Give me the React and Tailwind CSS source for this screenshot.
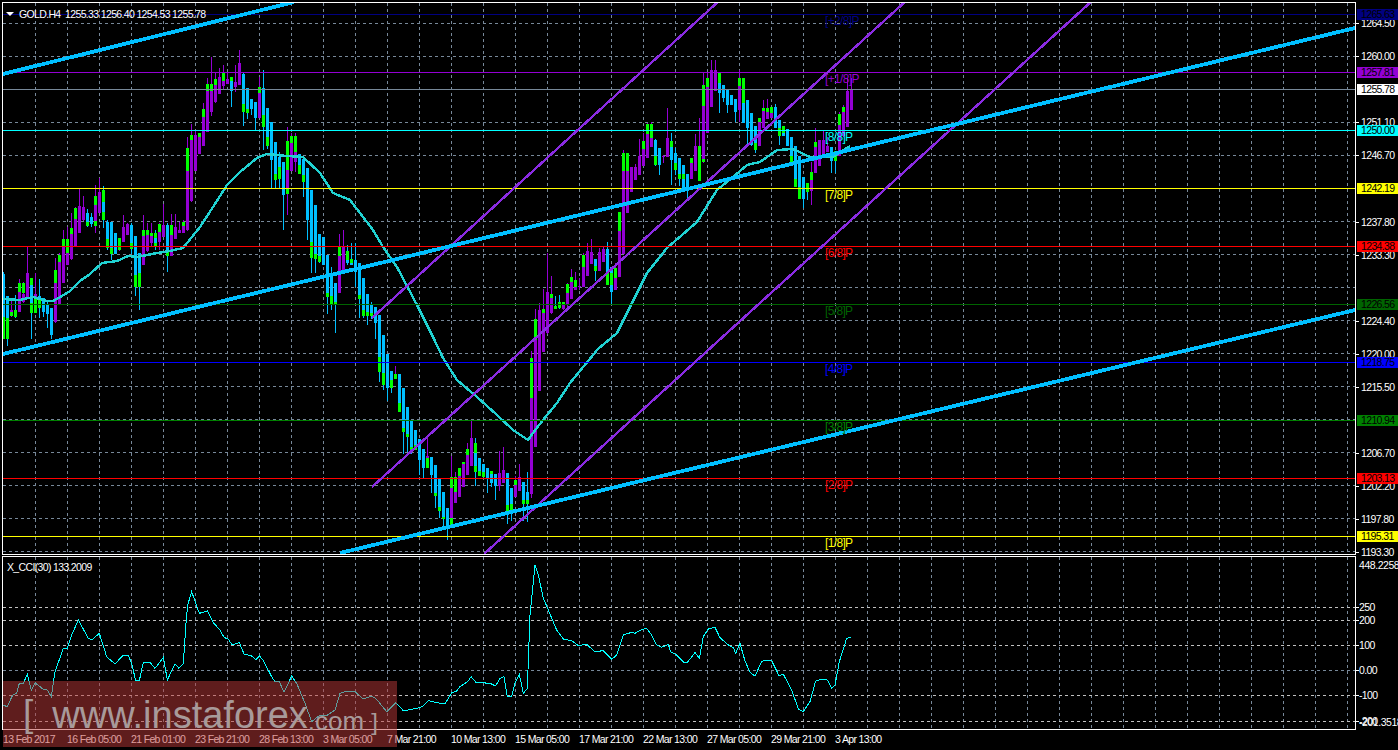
import React from 'react';

const BLUE = '#00bfff';
const PURPLE = '#9400d3';
const GREEN = '#00ff00';

// candles read off the chart: [x, type, bodyTop, bodyBottom, wickTop, wickBottom, ...greenFrom/To]
const seg = (ox, oy, rows) =>
  rows.map(([zx, t, top, bot, wt, wb, ...g]) => {
    const i = Math.round((ox + zx / 3 - 3.5) / 4);
    const y = (v) => oy + v / 3;
    const green = [];
    for (let k = 0; k < g.length; k += 2) green.push([y(g[k]), y(g[k + 1])]);
    return { i, t, top: y(top), bot: y(bot), wt: y(wt), wb: y(wb), green };
  });

const candles = [
  ...seg(0, 50, [
    [10, 'b', 672, 868, 665, 868, 800, 868], [22, 'b', 738, 868, 738, 888, 805, 868], [34, 'p', 780, 798, 750, 800, 785, 798],
    [46, 'b', 780, 800, 735, 805, 780, 800], [58, 'p', 725, 785, 688, 785, 700, 725], [70, 'p', 732, 755, 695, 760, 700, 730],
    [82, 'p', 670, 745, 592, 745], [94, 'b', 705, 788, 684, 868, 684, 705, 760, 788], [106, 'p', 732, 788, 668, 790, 745, 788],
    [118, 'b', 738, 775, 688, 805, 745, 775], [130, 'b', 745, 785, 745, 800], [142, 'b', 765, 792, 755, 833], [154, 'b', 775, 855, 775, 868],
    [166, 'p', 700, 815, 625, 820, 660, 700], [178, 'p', 635, 762, 610, 762, 615, 635], [190, 'p', 587, 698, 540, 700, 568, 587],
    [202, 'p', 610, 645, 530, 645, 568, 610], [214, 'p', 553, 628, 490, 630, 535, 553], [226, 'p', 508, 588, 470, 590, 475, 508],
    [238, 'p', 468, 548, 418, 548], [250, 'p', 472, 510, 438, 512], [262, 'b', 490, 528, 478, 530, 515, 528], [274, 'b', 502, 522, 490, 530],
    [286, 'p', 465, 512, 405, 548, 438, 465, 512, 528], [298, 'p', 425, 488, 383, 490], [310, 'b', 455, 510, 408, 535, 420, 455, 485, 510],
    [322, 'b', 515, 595, 510, 600, 568, 595], [334, 'b', 515, 612, 515, 630, 595, 612], [346, 'b', 548, 612, 548, 612],
    [358, 'p', 570, 600, 565, 602, 565, 600], [370, 'p', 530, 575, 495, 577], [382, 'p', 522, 555, 518, 556], [394, 'b', 525, 598, 520, 612, 580, 598],
    [406, 'b', 558, 712, 558, 738, 675, 712], [418, 'b', 610, 712, 612, 780, 670, 712], [430, 'p', 557, 645, 495, 645, 540, 557],
    [442, 'p', 555, 602, 520, 605, 540, 555], [454, 'p', 558, 580, 520, 590, 548, 558], [466, 'b', 565, 590, 540, 600, 548, 565, 580, 590],
    [478, 'p', 545, 575, 520, 600, 522, 545], [490, 'p', 525, 560, 462, 562], [502, 'b', 525, 618, 520, 665, 600, 618],
    [514, 'p', 555, 618, 492, 618, 525, 555], [526, 'p', 530, 568, 492, 568], [538, 'p', 540, 550, 515, 550], [550, 'p', 528, 548, 510, 550, 515, 528],
    [562, 'p', 362, 540, 262, 542, 295, 362], [574, 'p', 270, 452, 222, 455, 255, 270], [586, 'p', 255, 362, 240, 362], [598, 'p', 262, 312, 250, 312, 250, 262],
    [610, 'p', 202, 288, 158, 288, 178, 202], [622, 'p', 122, 245, 85, 245, 102, 122], [634, 'p', 122, 185, 22, 198, 102, 122], [646, 'p', 105, 155, 70, 158, 88, 105],
    [658, 'p', 80, 132, 55, 132], [670, 'p', 92, 108, 45, 120, 70, 92], [682, 'p', 88, 102, 70, 102], [694, 'b', 92, 122, 82, 172, 82, 92],
    [706, 'p', 95, 112, 45, 125], [718, 'p', 40, 105, 0, 105], [730, 'b', 72, 185, 68, 228, 162, 185], [742, 'b', 115, 190, 115, 208, 178, 190],
    [754, 'b', 148, 178, 148, 195], [766, 'b', 155, 205, 155, 240], [778, 'p', 130, 205, 80, 205, 112, 130], [790, 'b', 115, 230, 60, 300, 195, 230],
    [802, 'b', 175, 288, 175, 298, 262, 288], [814, 'b', 215, 330, 215, 415], [826, 'b', 275, 390, 275, 415, 372, 390], [838, 'b', 322, 388, 305, 415, 352, 388],
    [850, 'b', 335, 435, 335, 540], [862, 'p', 360, 415, 232, 495, 272, 360, 415, 432], [874, 'p', 278, 362, 250, 362, 258, 278],
    [886, 'p', 305, 335, 250, 365, 258, 305], [898, 'b', 312, 372, 312, 372, 345, 372],
  ]),
  ...seg(290, 230, [
    [40, 'b', -213, -144, -213, -100, -165, -144], [52, 'b', -186, -30, -186, 30], [64, 'b', -120, 85, -120, 130, 35, 85], [76, 'b', -75, 88, -75, 128, 72, 88],
    [88, 'b', 12, 95, 12, 100, 78, 95], [100, 'b', 22, 105, 22, 105], [112, 'b', 75, 200, 75, 252, 190, 200], [124, 'b', 130, 222, 112, 240, 198, 222],
    [136, 'b', 160, 225, 160, 310, 215, 225], [148, 'p', 78, 188, 12, 188, 52, 78], [160, 'p', 52, 125, 0, 125], [172, 'b', 90, 100, 45, 105, 62, 90],
    [184, 'b', 88, 105, 40, 105, 88, 100], [196, 'b', 90, 125, 40, 170], [208, 'b', 98, 208, 98, 265, 195, 208], [220, 'b', 145, 258, 145, 265, 240, 258],
    [232, 'b', 192, 258, 192, 285, 245, 258], [244, 'b', 222, 258, 215, 268, 250, 258], [256, 'b', 232, 280, 232, 328], [268, 'b', 255, 425, 255, 455, 380, 425],
    [280, 'b', 315, 465, 315, 480, 430, 465], [292, 'b', 372, 475, 372, 512], [304, 'b', 422, 475, 422, 490, 450, 475], [316, 'p', 432, 447, 408, 447, 432, 447],
    [328, 'b', 432, 545, 432, 545, 518, 545], [340, 'b', 475, 605, 475, 672, 595, 605], [352, 'b', 532, 620, 532, 665, 612, 620], [364, 'b', 572, 662, 572, 672, 650, 662],
    [376, 'b', 600, 660, 600, 660, 645, 660], [388, 'b', 628, 690, 628, 735], [400, 'b', 657, 713, 657, 748], [412, 'p', 678, 713, 625, 713, 685, 713],
    [424, 'b', 682, 735, 682, 790], [436, 'b', 705, 795, 705, 835, 788, 797], [448, 'b', 748, 842, 748, 865, 832, 842], [460, 'b', 785, 868, 785, 890, 860, 868],
    [472, 'b', 835, 890, 835, 930], [484, 'p', 775, 865, 678, 890, 742, 775, 865, 890], [496, 'p', 785, 820, 725, 820, 742, 785], [508, 'p', 738, 800, 715, 800, 715, 738],
    [520, 'p', 700, 770, 697, 770, 697, 702], [532, 'p', 675, 735, 640, 735, 657, 675], [544, 'p', 625, 708, 572, 708], [556, 'b', 640, 725, 625, 767, 640, 670, 708, 725],
    [568, 'b', 685, 738, 685, 738, 722, 738], [580, 'b', 702, 740, 702, 740, 725, 740], [592, 'b', 715, 745, 715, 790], [604, 'b', 722, 760, 722, 770, 722, 732],
    [616, 'b', 732, 768, 732, 810], [628, 'p', 730, 768, 662, 782], [640, 'p', 720, 760, 652, 760], [652, 'b', 730, 848, 730, 882, 825, 848],
    [664, 'b', 775, 848, 775, 872, 822, 848], [676, 'p', 765, 800, 738, 800, 750, 765], [688, 'p', 742, 782, 702, 782], [700, 'b', 757, 822, 757, 872, 810, 822],
    [712, 'b', 785, 822, 725, 875, 810, 822], [724, 'p', 503, 792, 362, 805, 385, 503], [736, 'p', 330, 650, 238, 650, 268, 330], [748, 'p', 240, 482, 218, 482],
    [760, 'p', 250, 365, 178, 365, 238, 250], [772, 'p', 187, 310, 70, 312], [784, 'p', 205, 250, 138, 252, 192, 205], [796, 'b', 228, 237, 198, 237, 228, 237],
    [808, 'b', 215, 235, 195, 237, 215, 235], [820, 'p', 225, 237, 215, 240, 215, 225], [832, 'p', 190, 222, 160, 240, 162, 190],
  ]),
  ...seg(520, 60, [
    [154, 'p', 665, 718, 628, 718, 652, 665], [166, 'p', 680, 690, 635, 690, 660, 680], [178, 'p', 678, 682, 655, 690], [190, 'p', 620, 682, 578, 682, 585, 620],
    [202, 'p', 573, 648, 550, 648], [214, 'p', 575, 612, 538, 612], [226, 'b', 598, 632, 598, 662, 618, 632], [238, 'p', 575, 632, 565, 632], [250, 'p', 568, 605, 558, 605],
    [262, 'b', 568, 650, 545, 675, 640, 675], [274, 'b', 620, 695, 620, 732, 640, 675], [286, 'p', 655, 690, 610, 690, 625, 655], [298, 'p', 513, 650, 457, 650, 457, 513],
    [310, 'p', 332, 582, 270, 582, 280, 332], [322, 'p', 332, 458, 280, 458, 280, 332], [334, 'p', 322, 395, 322, 395], [346, 'p', 322, 360, 312, 360],
    [358, 'p', 288, 345, 238, 345], [370, 'p', 268, 318, 220, 318, 243, 268], [382, 'p', 222, 295, 188, 295, 192, 222], [394, 'p', 192, 262, 185, 262, 192, 235],
    [406, 'b', 240, 315, 238, 318, 288, 315], [418, 'b', 265, 315, 265, 345], [430, 'p', 288, 292, 285, 310], [442, 'p', 235, 292, 145, 292], [454, 'b', 260, 300, 220, 375, 243, 260],
    [466, 'b', 280, 330, 265, 345, 310, 330], [478, 'b', 293, 358, 293, 378, 342, 358], [490, 'b', 315, 385, 315, 385, 342, 358], [502, 'b', 342, 385, 342, 420],
    [514, 'p', 310, 358, 295, 358, 295, 310], [526, 'p', 258, 332, 222, 332], [538, 'p', 258, 362, 175, 362, 258, 362], [550, 'p', 138, 300, 40, 310, 75, 138, 298, 305],
    [562, 'p', 82, 220, 40, 220, 55, 82], [574, 'p', 30, 142, 0, 142], [586, 'p', 30, 92, 0, 92], [598, 'b', 40, 98, 35, 160, 40, 68], [610, 'b', 75, 115, 75, 125],
    [622, 'b', 90, 135, 90, 158], [634, 'b', 105, 135, 105, 135], [646, 'b', 118, 155, 118, 185], [658, 'p', 78, 150, 30, 185, 55, 78], [670, 'b', 85, 188, 85, 190, 55, 130],
    [682, 'b', 120, 205, 120, 255], [694, 'b', 160, 255, 160, 258], [706, 'b', 198, 270, 198, 278, 250, 270], [718, 'p', 185, 258, 175, 258, 175, 185],
    [730, 'p', 152, 205, 120, 205, 145, 152], [742, 'p', 145, 178, 118, 178, 145, 155], [754, 'p', 140, 175, 140, 175, 140, 160], [766, 'b', 140, 205, 133, 205],
    [778, 'b', 180, 228, 180, 255, 205, 228], [790, 'b', 198, 228, 198, 228, 198, 220], [802, 'b', 208, 258, 208, 258], [814, 'b', 232, 310, 232, 315, 288, 310],
    [826, 'b', 258, 380, 258, 380, 358, 380], [838, 'b', 288, 418, 288, 418, 382, 418], [850, 'b', 350, 418, 350, 445], [862, 'b', 370, 395, 370, 420, 370, 395],
    [874, 'p', 360, 392, 305, 435, 335, 360], [886, 'p', 262, 338, 205, 338, 245, 262], [898, 'p', 240, 318, 240, 318], [910, 'p', 240, 282, 210, 282],
    [922, 'p', 258, 275, 230, 275], [934, 'b', 262, 302, 262, 340], [946, 'b', 272, 302, 272, 340, 272, 302], [958, 'p', 195, 288, 155, 288, 162, 195],
    [970, 'p', 155, 228, 135, 230, 140, 155], [982, 'p', 92, 200, 55, 200], [994, 'p', 88, 150, 55, 150],
  ]),
];

const maLine = [
  [3, 299], [20, 300], [33, 297], [47, 301], [53, 301], [62, 296], [70, 291], [80, 281], [90, 274], [102, 263], [117, 261], [128, 256], [137, 257],
  [157, 253], [170, 251], [183, 248], [200, 227], [213, 207], [227, 185], [240, 172], [257, 158], [267, 154], [287, 156], [303, 157], [320, 173], [333, 193],
  [350, 200], [373, 230], [383, 247], [397, 267], [417, 305], [433, 337], [443, 358], [457, 380], [477, 397], [497, 415], [513, 430], [528, 440], [533, 433],
  [543, 420], [557, 403], [570, 383], [598, 349], [617, 333], [630, 307], [647, 273], [667, 248], [697, 222], [717, 190], [733, 177], [747, 165], [760, 162],
  [777, 150], [793, 149], [810, 157], [833, 157], [850, 146],
];

const cci1 = [
  [8, 495], [22, 500], [38, 465], [50, 460], [58, 430], [70, 430], [82, 403], [94, 452], [105, 428], [130, 448], [142, 450], [154, 470], [165, 395], [190, 325],
  [202, 325], [215, 285], [235, 240], [265, 295], [275, 300], [298, 280], [320, 350], [345, 372], [370, 345], [385, 347], [395, 370], [407, 422], [418, 422],
  [430, 367], [450, 367], [465, 385], [490, 352], [502, 420], [525, 372], [537, 385], [550, 370], [558, 250], [563, 195], [575, 155], [598, 220], [622, 213],
  [640, 248], [660, 270], [672, 292], [685, 298], [697, 315], [718, 308], [732, 342], [755, 348], [768, 360], [778, 347], [790, 362], [815, 410], [825, 425],
  [838, 425], [852, 457], [875, 408], [890, 430], [915, 490], [935, 545], [960, 525], [980, 527], [1005, 510], [1020, 460], [1035, 455], [1065, 455], [1090, 477],
  [1115, 468], [1130, 478], [1160, 515], [1187, 488], [1210, 512], [1225, 510], [1260, 503],
].map(([x, y]) => [x / 3, 540 + y / 3]);

const cci2 = [
  [60, 458], [70, 452], [85, 437], [110, 443], [135, 447], [148, 425], [155, 413], [170, 408], [180, 395], [205, 378], [213, 365], [228, 382], [270, 385], [287, 393],
  [300, 370], [312, 365], [322, 425], [335, 425], [345, 385], [358, 358], [370, 415], [382, 400], [390, 180], [405, 30], [415, 60], [430, 130], [445, 165], [470, 225],
  [490, 252], [515, 257], [535, 272], [560, 268], [585, 290], [610, 287], [635, 313], [650, 300], [670, 240], [695, 232], [705, 235], [720, 226], [740, 220], [755, 240],
  [770, 270], [785, 277], [805, 268], [812, 290], [830, 300], [852, 322], [862, 322], [885, 293], [898, 310], [910, 245], [925, 222], [945, 217], [960, 248], [985, 270],
  [1000, 278], [1007, 295], [1020, 265], [1035, 318], [1050, 352], [1065, 363], [1085, 320], [1095, 315], [1115, 317], [1137, 362], [1150, 358], [1175, 405], [1195, 462],
  [1210, 470], [1230, 440], [1247, 378], [1265, 372], [1282, 375], [1295, 400], [1305, 390], [1318, 320], [1340, 250], [1352, 246],
].map(([x, y]) => [400 + x / 3, 555 + y / 3]);

const pts = (a) => a.map((p) => p.join(',')).join(' ');

const vGrid = Array.from({ length: 42 }, (_, k) => 35 + 32 * k);
const hGrid = Array.from({ length: 17 }, (_, k) => 23 + 33 * k);

const murrey = [
  { y: 14, c: '#000080', tag: '1265.63', label: '[+2/8]P' },
  { y: 72, c: '#9400d3', tag: '1257.81', label: '[+1/8]P' },
  { y: 130, c: '#00ffff', tag: '1250.00', label: '[8/8]P' },
  { y: 188, c: '#ffff00', tag: '1242.19', label: '[7/8]P' },
  { y: 246, c: '#ff0000', tag: '1234.38', label: '[6/8]P' },
  { y: 304, c: '#006400', tag: '1226.56', label: '[5/8]P' },
  { y: 362, c: '#0000ff', tag: '1218.75', label: '[4/8]P' },
  { y: 420, c: '#008000', tag: '1210.94', label: '[3/8]P' },
  { y: 478, c: '#ff0000', tag: '1203.13', label: '[2/8]P' },
  { y: 536, c: '#ffff00', tag: '1195.31', label: '[1/8]P' },
];

const priceLabels = [
  [23, '1264.50'], [56, '1260.00'], [122, '1251.10'], [155, '1246.70'], [222, '1237.80'], [255, '1233.30'], [321, '1224.40'], [354, '1220.00'],
  [387, '1215.50'], [453, '1206.70'], [486, '1202.20'], [519, '1197.80'], [552, '1193.30'],
];

const cciLines = [[607, '250'], [620, '200'], [645, '100'], [670, '0.00'], [695, '-100'], [721, '-200']];

const times = [
  '13 Feb 2017', '16 Feb 05:00', '21 Feb 01:00', '23 Feb 21:00', '28 Feb 13:00', '3 Mar 05:00', '7 Mar 21:00',
  '10 Mar 13:00', '15 Mar 05:00', '17 Mar 21:00', '22 Mar 13:00', '27 Mar 05:00', '29 Mar 21:00', '3 Apr 13:00',
];

function MainChart() {
  return (
    <svg viewBox="3 3 1352 551" className="block w-[1352px] h-[551px]" shapeRendering="crispEdges">
      {vGrid.map((x) => (
        <line key={x} x1={x + 0.5} x2={x + 0.5} y1="3" y2="554" stroke="#778899" strokeDasharray="3 3" />
      ))}
      {hGrid.map((y) => (
        <line key={y} x1="3" x2="1355" y1={y + 0.5} y2={y + 0.5} stroke="#778899" strokeDasharray="3 3" />
      ))}
      {candles.map((c) => (
        <g key={c.i}>
          <rect x={3 + 4 * c.i} width="1" y={c.wt} height={c.wb - c.wt} fill={c.t === 'b' ? BLUE : PURPLE} />
          <rect x={2 + 4 * c.i} width="3" y={c.top} height={c.bot - c.top} fill={c.t === 'b' ? BLUE : PURPLE} />
          {c.green.map(([a, b]) => (
            <rect key={a} x={2 + 4 * c.i} width="3" y={a} height={b - a} fill={GREEN} />
          ))}
        </g>
      ))}
      <polyline points={pts(maLine)} fill="none" stroke="#20d2d2" strokeWidth="2.4" />
      {murrey.map((m) => (
        <line key={m.y} x1="3" x2="1355" y1={m.y + 0.5} y2={m.y + 0.5} stroke={m.c} />
      ))}
      <line x1="3" x2="1355" y1="89.5" y2="89.5" stroke="#778899" />
      <g stroke="#8a2be2" strokeWidth="2.4">
        <line x1="372" y1="318" x2="720" y2="0" />
        <line x1="372" y1="487" x2="907" y2="0" />
        <line x1="484" y1="554" x2="1093" y2="0" />
      </g>
      <g stroke={BLUE} strokeWidth="3.8">
        <line x1="3" y1="74" x2="294" y2="2" />
        <line x1="3" y1="354" x2="1355" y2="28" />
        <line x1="340" y1="553" x2="1355" y2="310" />
      </g>
      {murrey.map((m) => (
        <text key={m.label} x="825" y={m.y + 11} fill={m.c} className="font-['Liberation_Sans',sans-serif] text-[12px]">
          {m.label}
        </text>
      ))}
    </svg>
  );
}

function CciChart() {
  return (
    <svg viewBox="3 557 1352 172" className="block w-[1352px] h-[172px]" shapeRendering="crispEdges">
      {vGrid.map((x) => (
        <line key={x} x1={x + 0.5} x2={x + 0.5} y1="557" y2="729" stroke="#778899" strokeDasharray="3 3" />
      ))}
      {cciLines.map(([y]) => (
        <line key={y} x1="3" x2="1355" y1={y + 0.5} y2={y + 0.5} stroke={y === 670 ? '#778899' : '#c0c0c0'} strokeDasharray="3 3" />
      ))}
      <polyline points={pts([...cci1, ...cci2])} fill="none" stroke="#00ffff" />
    </svg>
  );
}

export default function App() {
  return (
    <div className="relative w-[1398px] h-[750px] bg-black overflow-hidden pt-[2px] pl-[2px] text-white font-['Liberation_Sans',sans-serif] text-[10.5px] tracking-[-0.65px] leading-none">
      <div className="flex h-[553px]">
        <div className="relative w-[1354px] border border-white">
          <MainChart />
          <div className="absolute left-[3px] top-[6px] flex items-center gap-[5px] whitespace-pre">
            <span className="w-0 h-0 border-x-[4px] border-x-transparent border-t-[4px] border-t-white" />
            <span>GOLD.H4  1255.33 1256.40 1254.53 1255.78</span>
          </div>
        </div>
        <div className="relative flex-1">
          {priceLabels.map(([y, t]) => (
            <React.Fragment key={t}>
              <span className="absolute left-0 w-[3px] h-px bg-white" style={{ top: y - 2 }} />
              <span className="absolute left-[5px]" style={{ top: y - 7 }}>{t}</span>
            </React.Fragment>
          ))}
          {murrey.map((m) => (
            <span
              key={m.tag}
              className="absolute left-[1px] w-[41px] h-[11px] pl-[4px] leading-[11px] text-black"
              style={{ top: m.y - 7, backgroundColor: m.c }}
            >
              {m.tag}
            </span>
          ))}
          <span className="absolute left-[1px] top-[82px] w-[41px] h-[11px] pl-[4px] leading-[11px] bg-white text-black">1255.78</span>
        </div>
      </div>

      <div className="flex h-[174px] mt-[1px]">
        <div className="relative w-[1354px] border border-white">
          <CciChart />
          <span className="absolute left-[4px] top-[5px]">X_CCI(30) 133.2009</span>
        </div>
        <div className="relative flex-1">
          <span className="absolute left-[3px] top-[4px] tracking-[-0.45px]">448.2258</span>
          {cciLines.map(([y, t]) => (
            <React.Fragment key={t}>
              <span className="absolute left-0 w-[3px] h-px bg-white" style={{ top: y - 556 }} />
              <span className="absolute left-[3px]" style={{ top: y - 561 }}>{t}</span>
            </React.Fragment>
          ))}
          <span className="absolute left-[3px] top-[161px] tracking-[-0.45px]">-201.3518</span>
        </div>
      </div>

      <div className="grid grid-cols-[repeat(14,64px)] pt-[4px] whitespace-nowrap">
        {times.map((t) => (
          <span key={t} className="pl-[1px]">{t}</span>
        ))}
      </div>

      <div className="absolute left-[3px] top-[681px] w-[394px] h-[66px] bg-[rgba(190,58,58,0.5)] flex items-end pb-[13px] pl-[20px] tracking-normal text-[#a89a9a]">
        <span className="text-[37px] leading-none mb-[2px]">[</span>
        <span className="ml-[19px] text-[38px] leading-none">www.instaforex</span>
        <span className="text-[26px] leading-none">.com</span>
        <span className="ml-[7px] text-[24px] leading-none">]</span>
      </div>
    </div>
  );
}
